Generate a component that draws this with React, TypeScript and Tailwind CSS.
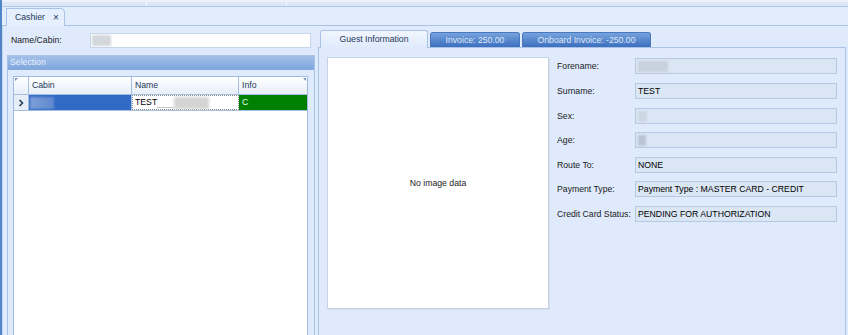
import React from 'react';

const fields = [
  { label: 'Forename:', value: '', blur: 'w-[30px] bg-[#c8d2de]', mt: 'mt-[1px]' },
  { label: 'Surname:', value: 'TEST', blur: '', mt: 'mt-[9px]' },
  { label: 'Sex:', value: '', blur: 'w-[9px] bg-[#ccd6e3]', mt: 'mt-[9px]' },
  { label: 'Age:', value: '', blur: 'w-[8px] bg-[#b9c5d5]', mt: 'mt-[8px]' },
  { label: 'Route To:', value: 'NONE', blur: '', mt: 'mt-[9px]' },
  { label: 'Payment Type:', value: 'Payment Type : MASTER CARD - CREDIT', blur: '', mt: 'mt-[8px]' },
  { label: 'Credit Card Status:', value: 'PENDING FOR AUTHORIZATION', blur: '', mt: 'mt-[9px]' },
];

const CashierLeft: React.FC = () => (
  <div className="w-[314px] flex flex-col border-l border-[#c3d6ef]">
    <div className="mt-[7px] flex items-center pl-[8px]">
      <span className="w-[79px] text-[#1b1b1b]">Name/Cabin:</span>
      <div className="w-[221px] h-[15px] bg-white border border-[#c6d5e9] flex items-center pl-[1px]">
        <div className="w-[19px] h-[11px] bg-[#d3d6db] blur-[1px]" />
      </div>
    </div>
    <div className="mt-[7px] ml-[4px] w-[308px] flex-1 flex flex-col border border-b-0 border-[#a9c3e6]">
      <div className="h-[14px] bg-gradient-to-b from-[#a2c0e9] to-[#7fa7dd] border-b border-[#86aadd] flex items-center pl-[2px] text-[#e9f1fc]">
        Selection
      </div>
      <div className="mt-[6px] ml-[5px] w-[295px] flex-1 flex flex-col bg-white border border-b-0 border-[#9fbbe0] relative">
        <div className="absolute left-[1px] top-[1px] w-0 h-0 border-t-[3px] border-r-[3px] border-t-[#6f8fb8] border-r-transparent" />
        <div className="absolute right-[1px] top-[1px] w-0 h-0 border-t-[3px] border-l-[3px] border-t-[#6f8fb8] border-l-transparent" />
        <div className="h-[18px] flex bg-gradient-to-b from-[#ffffff] to-[#e7eef8] border-b border-[#a4bfe0] text-[#1e395b]">
          <div className="w-[15px] border-r border-[#a4bfe0]" />
          <div className="w-[103px] border-r border-[#a4bfe0] flex items-center pl-[3px]">Cabin</div>
          <div className="w-[107px] border-r border-[#a4bfe0] flex items-center pl-[3px]">Name</div>
          <div className="flex-1 flex items-center pl-[3px]">Info</div>
        </div>
        <div className="h-[16px] flex border-b border-[#a4bfe0]">
          <div className="w-[15px] border-r border-[#a4bfe0] bg-[#e6eef9] flex items-center justify-center">
            <svg width="6" height="8" viewBox="0 0 6 8">
              <path d="M1.5 1 L4.5 4 L1.5 7" stroke="#1e395b" strokeWidth="1.5" fill="none" />
            </svg>
          </div>
          <div className="w-[103px] bg-[#316ac5] border-r border-[#a4bfe0] flex items-center pl-[1px]">
            <div className="w-[24px] h-[12px] bg-gradient-to-r from-[#7c9fd8] to-[#5f88cf] blur-[1px]" />
          </div>
          <div className="w-[107px] bg-white border border-dotted border-[#8a8a8a] flex items-center pl-[2px] text-black">
            <span>TEST</span>
            <div className="w-[17px] h-[1px] mt-[9px] bg-[#c9c9c9]" />
            <div className="w-[35px] h-[12px] bg-[#d4d4d4] blur-[1.5px]" />
          </div>
          <div className="flex-1 bg-[#008000] flex items-center pl-[3px] text-[#e8ffe8]">C</div>
        </div>
      </div>
    </div>
  </div>
);

const CashierRight: React.FC = () => (
  <div className="flex-1 flex flex-col px-[2px] pt-[3px]">
    <div className="h-[18px] flex items-end pl-[2px] gap-[2px] relative z-10">
      <div className="w-[108px] h-[18px] mb-[-1px] bg-gradient-to-b from-[#f1f6fe] to-[#dfeafc] border border-b-0 border-[#a9c3e6] rounded-t-[3px] flex items-center justify-center text-[#1e395b]">
        Guest Information
      </div>
      <div className="w-[90px] h-[15px] bg-gradient-to-b from-[#76a2dc] to-[#3d6fbf] border border-b-0 border-[#4a78bf] rounded-t-[3px] flex items-center justify-center text-[#dde8f8]">
        Invoice: 250.00
      </div>
      <div className="w-[129px] h-[15px] bg-gradient-to-b from-[#76a2dc] to-[#3d6fbf] border border-b-0 border-[#4a78bf] rounded-t-[3px] flex items-center justify-center text-[#dde8f8]">
        Onboard Invoice: -250.00
      </div>
    </div>
    <div className="flex-1 flex border border-b-0 border-[#a9c3e6] bg-[#dfeafc] pl-[8px] pt-[9px]">
      <div className="w-[222px] h-[252px] bg-white border border-[#c5d3e6] shadow-[1px_1px_0_#d3deec] flex items-center justify-center text-[#1b1b1b]">
        No image data
      </div>
      <div className="ml-[8px] flex flex-col">
        {fields.map((f) => (
          <div key={f.label} className={`flex items-center h-[16px] ${f.mt}`}>
            <span className="w-[78px] text-[#1b1b1b] whitespace-nowrap">{f.label}</span>
            <div className="w-[202px] h-[16px] bg-[#dbe6f5] border border-[#b6c9e2] flex items-center pl-[2px] text-black">
              {f.blur ? <div className={`h-[11px] blur-[1px] ${f.blur}`} /> : f.value}
            </div>
          </div>
        ))}
      </div>
    </div>
  </div>
);

export default function App() {
  return (
    <div className="w-[848px] h-[335px] overflow-hidden flex bg-[#dfeafc] font-['Liberation_Sans',Arial,sans-serif] text-[8.7px] leading-none">
      <div className="w-[2px] bg-[#5285c8]" />
      <div className="flex-1 flex flex-col">
        <div className="h-[7px] bg-[#dbe6f6] border-t-[2px] border-t-[#eef2f8] border-b border-[#b1c7e6] flex">
          <div className="w-[145px] border-r border-[#f4f7fc]" />
          <div className="w-[140px] border-r border-[#f4f7fc]" />
        </div>
        <div className="h-[19px] bg-[#e2edfc] flex items-end pl-[4px] border-b border-[#a9c3e6]">
          <div className="w-[59px] h-[18px] mb-[-1px] bg-[#e6effd] border border-b-0 border-[#a9c3e6] rounded-tr-[5px] flex items-center pl-[8px] text-[#1e395b]">
            <span>Cashier</span>
            <span className="ml-[8px] text-[10px]">×</span>
          </div>
        </div>
        <div className="flex-1 flex">
          <CashierLeft />
          <CashierRight />
        </div>
      </div>
    </div>
  );
}
